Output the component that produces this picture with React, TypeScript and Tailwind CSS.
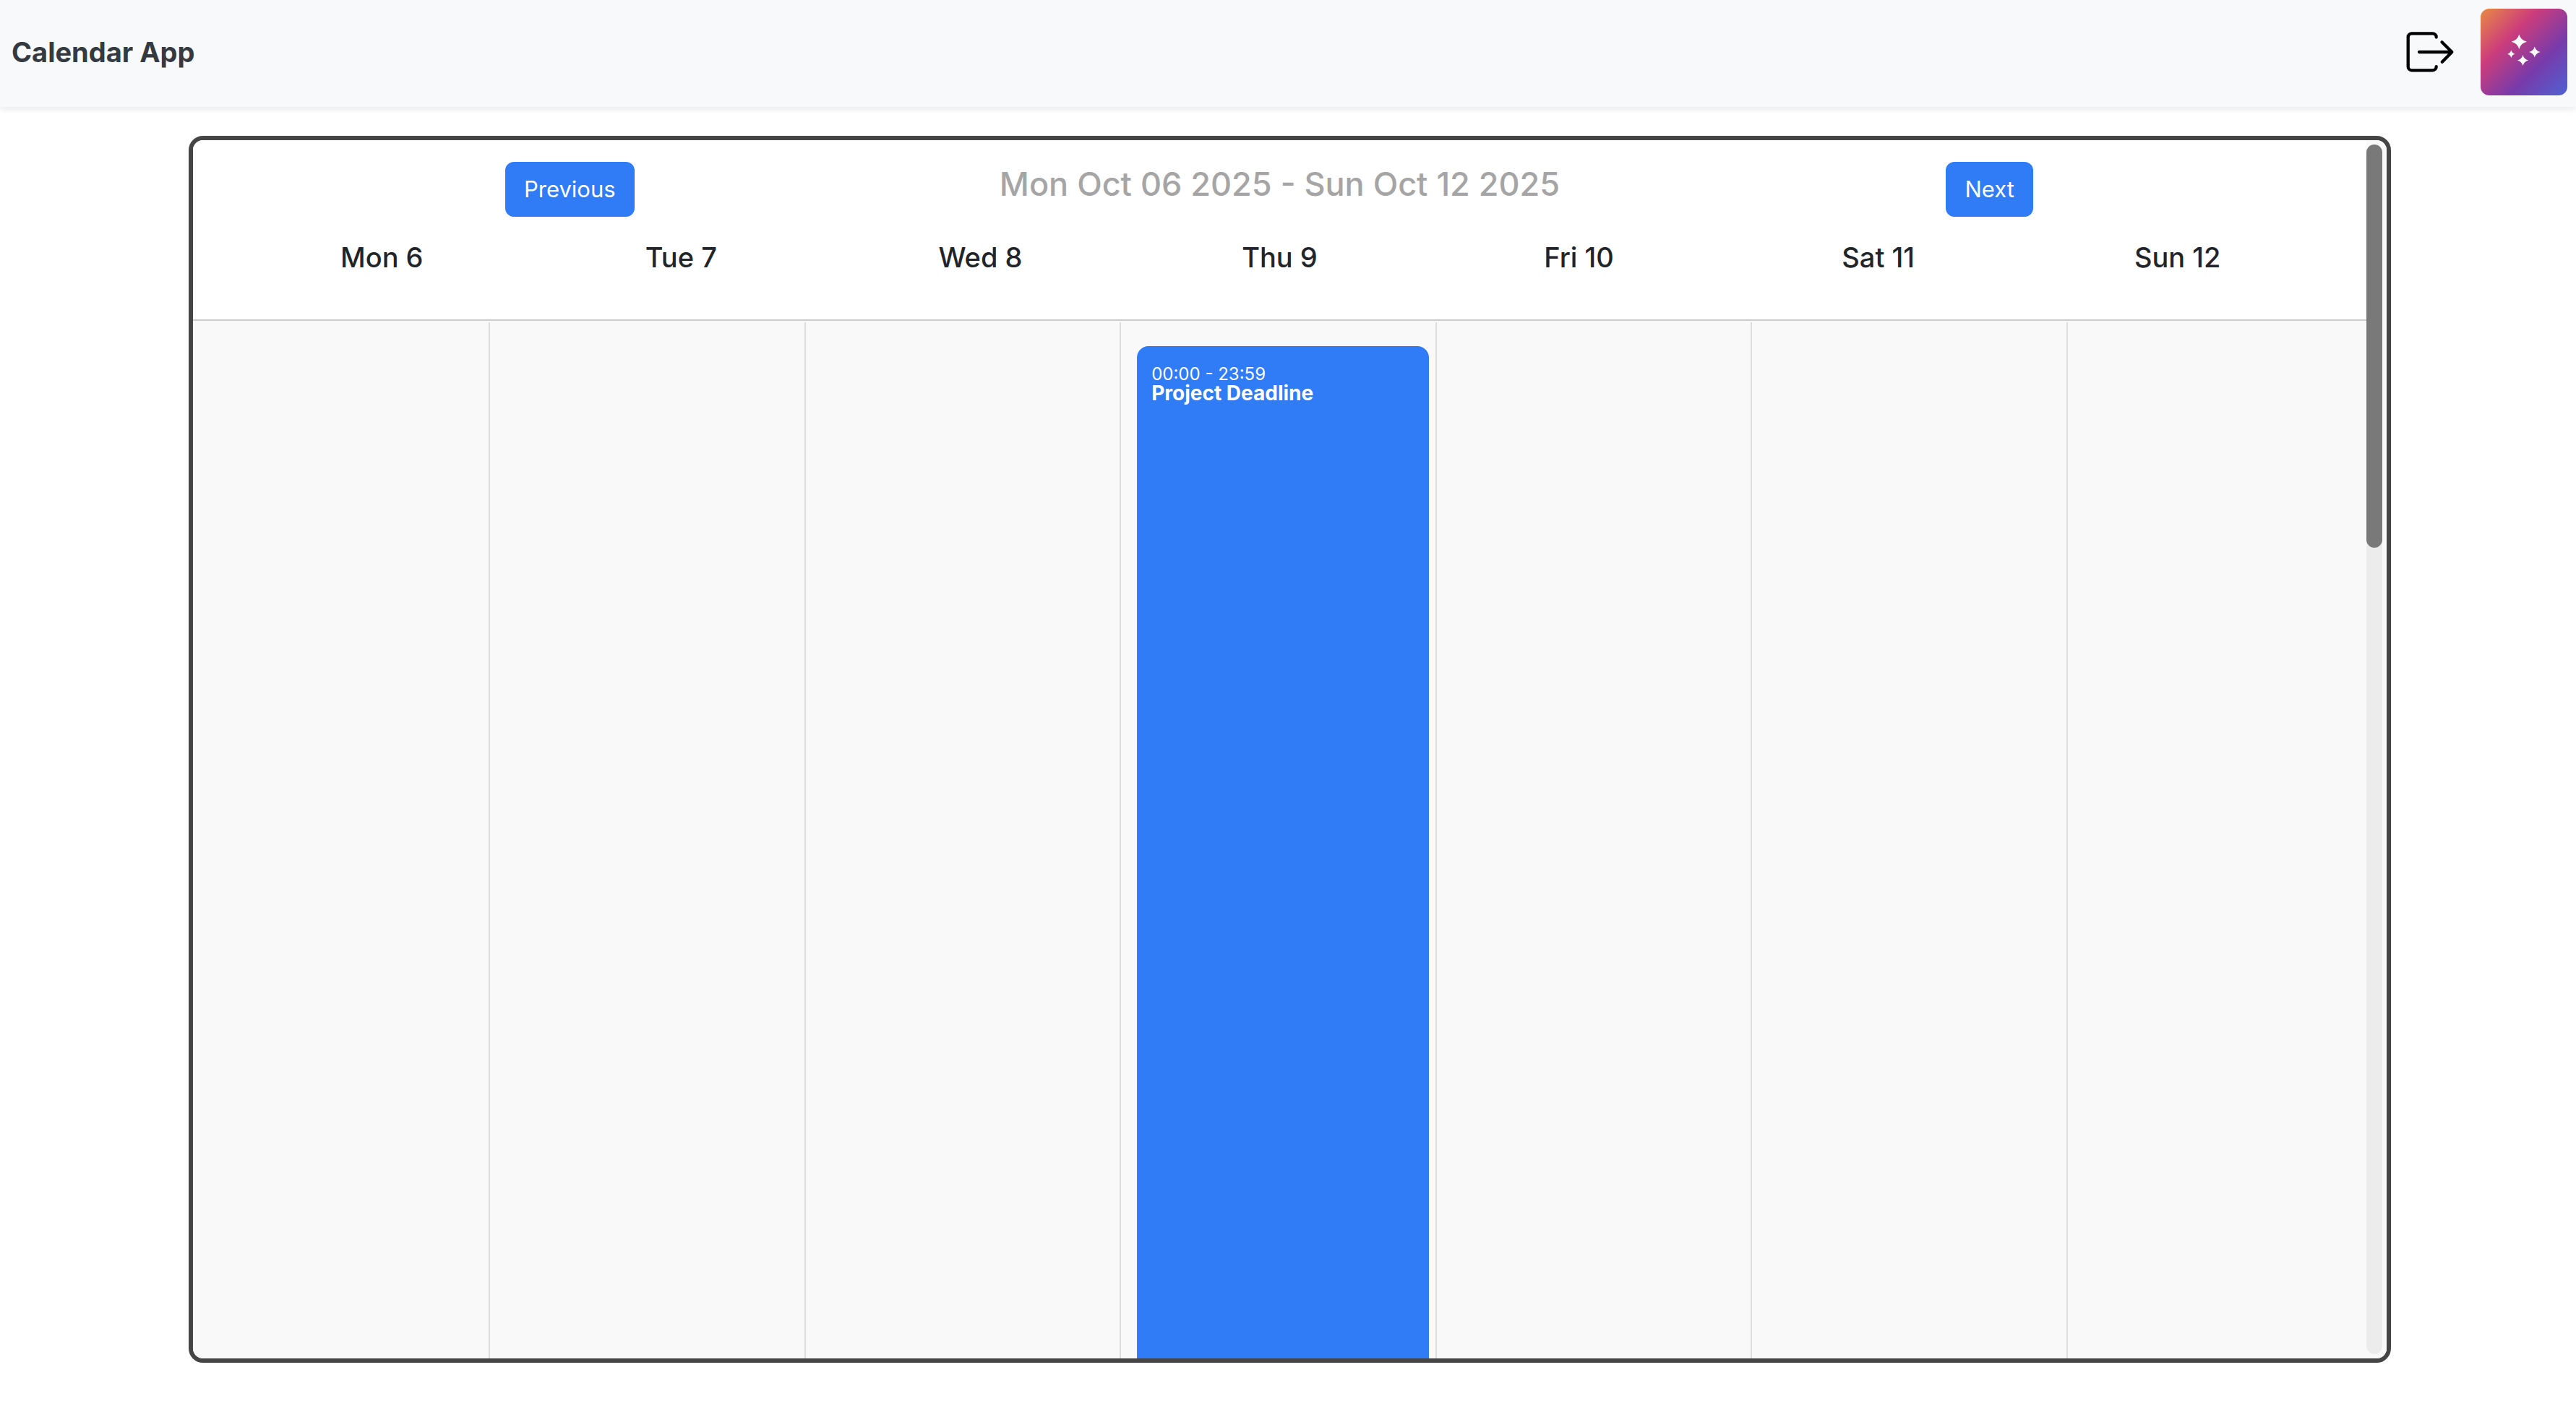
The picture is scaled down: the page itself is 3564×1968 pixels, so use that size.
const days = ["Mon 6", "Tue 7", "Wed 8", "Thu 9", "Fri 10", "Sat 11", "Sun 12"];

type CalendarEvent = { day: number; time: string; title: string };

const events: CalendarEvent[] = [{ day: 3, time: "00:00 - 23:59", title: "Project Deadline" }];

function LogoutIcon() {
  return (
    <svg width="72" height="64" viewBox="0 0 72 64" fill="none" stroke="#000" strokeWidth="4.3" strokeLinecap="round" strokeLinejoin="round" aria-hidden="true">
      <path d="M42.700 11.500v-.2a5 5 0 0 0-5-5H8.700a5 5 0 0 0-5 5v41a5 5 0 0 0 5 5h29a5 5 0 0 0 5-5v-.2" />
      <path d="M19 32h45.300M50.500 18.200 64.300 32 50.800 45.800" />
    </svg>
  );
}

function SparklesIcon() {
  return (
    <svg width="120" height="120" viewBox="0 0 120 120" fill="#fff" aria-hidden="true">
      <path d="M53.300 35.500q2 8.200 10.700 10.200q-8.700 2-10.700 10.200q-2-8.200-10.700-10.200q8.700-2 10.700-10.200z" />
      <path d="M42.300 57.500q1.100 4.100 5.200 5.200q-4.100 1.100-5.200 5.200q-1.100-4.100-5.200-5.200q4.100-1.100 5.200-5.200z" />
      <path d="M58.500 64q1.500 6 7.700 7.500q-6.200 1.500-7.700 7.500q-1.500-6-7.700-7.500q6.200-1.500 7.700-7.500z" />
      <path d="M74.800 52.500q1.500 6 7.700 7.500q-6.200 1.500-7.700 7.500q-1.500-6-7.700-7.500q6.200-1.500 7.700-7.500z" />
    </svg>
  );
}

function NavButton({ label }: { label: string }) {
  return (
    <button type="button" className="rounded-xl bg-[#307bf6] px-[26px] py-3.5 text-[31px] leading-12 text-white">
      {label}
    </button>
  );
}

export default function App() {
  return (
    <div className="flex h-screen flex-col bg-white font-['Inter',sans-serif] text-[#212529]">
      <header className="flex items-center justify-between bg-[#f8f9fb] pt-3 pr-3 pb-4 pl-4 shadow-[0_4px_8px_rgba(0,0,0,0.08)]">
        <h1 className="text-[38px] leading-12 font-bold text-[#343a40]">Calendar App</h1>
        <div className="flex items-center gap-8">
          <button type="button" aria-label="Log out">
            <LogoutIcon />
          </button>
          <button
            type="button"
            aria-label="Assistant"
            className="rounded-xl bg-[linear-gradient(135deg,#e88a43_0%,#cc3d7b_33%,#783aaa_66%,#4f62d3_100%)]"
          >
            <SparklesIcon />
          </button>
        </div>
      </header>

      <div className="flex min-h-0 flex-1 justify-center pt-10 pb-[82px] pl-[5px]">
        <main className="relative flex w-[85.6%] flex-col overflow-hidden rounded-[20px] border-6 border-[#454545] pr-7">
          <div className="border-b-2 border-[#ccc] bg-white pt-[30px] pb-[62px]">
            <div className="grid grid-cols-3 items-start justify-items-center px-[30px]">
              <NavButton label="Previous" />
              <h2 className="text-[45px] leading-[62px] font-medium text-[#a5a5a5]">Mon Oct 06 2025 - Sun Oct 12 2025</h2>
              <NavButton label="Next" />
            </div>
            <div className="mt-8 grid grid-cols-7 px-[54px] text-center text-[38px] leading-12 font-medium">
              {days.map((day) => (
                <div key={day}>{day}</div>
              ))}
            </div>
          </div>

          <div className="-mr-7 flex min-h-0 flex-1 bg-[#f9f9f9] pt-0.5 pr-1">
            <div className="-ml-[26px] grid flex-1 grid-cols-7">
              {days.map((day, index) => (
                <div key={day} className="flex flex-col border-r-2 border-[#ddd] pt-[33px] pr-[9px] pl-[22px] last:border-r-0">
                  {events
                    .filter((event) => event.day === index)
                    .map((event) => (
                      <article key={event.title} className="flex-1 rounded-t-2xl bg-[#307bf6] px-5 pt-[26px] text-white">
                        <p className="text-[24px] leading-[26px]">{event.time}</p>
                        <p className="text-[28px] leading-[26px] font-bold">{event.title}</p>
                      </article>
                    ))}
                </div>
              ))}
            </div>
          </div>

          <div className="absolute inset-y-0 right-0 w-7 bg-[#f9f9f9] py-1.5 pr-1.5">
            <div className="h-full rounded-full bg-[#ececec]">
              <div className="h-1/3 rounded-full bg-[#797979]" />
            </div>
          </div>
        </main>
      </div>
    </div>
  );
}
